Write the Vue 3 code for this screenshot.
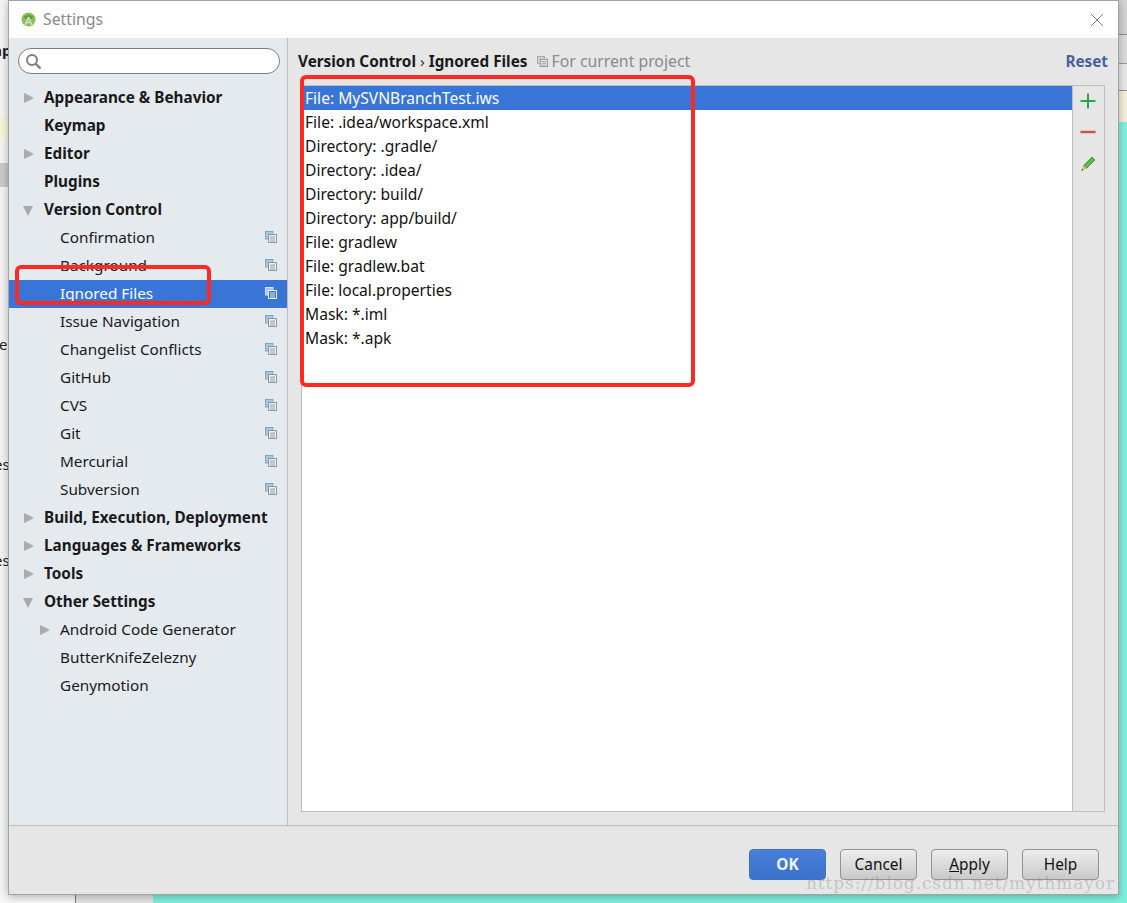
<script setup>
const tree = [
  { label: 'Appearance & Behavior', bold: true, arrow: 'right' },
  { label: 'Keymap', bold: true },
  { label: 'Editor', bold: true, arrow: 'right' },
  { label: 'Plugins', bold: true },
  { label: 'Version Control', bold: true, arrow: 'down' },
  { label: 'Confirmation', sub: true, copy: true },
  { label: 'Background', sub: true, copy: true },
  { label: 'Ignored Files', sub: true, copy: true, active: true },
  { label: 'Issue Navigation', sub: true, copy: true },
  { label: 'Changelist Conflicts', sub: true, copy: true },
  { label: 'GitHub', sub: true, copy: true },
  { label: 'CVS', sub: true, copy: true },
  { label: 'Git', sub: true, copy: true },
  { label: 'Mercurial', sub: true, copy: true },
  { label: 'Subversion', sub: true, copy: true },
  { label: 'Build, Execution, Deployment', bold: true, arrow: 'right' },
  { label: 'Languages & Frameworks', bold: true, arrow: 'right' },
  { label: 'Tools', bold: true, arrow: 'right' },
  { label: 'Other Settings', bold: true, arrow: 'down' },
  { label: 'Android Code Generator', sub: true, arrow: 'right' },
  { label: 'ButterKnifeZelezny', sub: true },
  { label: 'Genymotion', sub: true },
]
const files = [
  'File: MySVNBranchTest.iws',
  'File: .idea/workspace.xml',
  'Directory: .gradle/',
  'Directory: .idea/',
  'Directory: build/',
  'Directory: app/build/',
  'File: gradlew',
  'File: gradlew.bat',
  'File: local.properties',
  'Mask: *.iml',
  'Mask: *.apk',
]
</script>

<template>
  <div class="desk">
    <div class="bg-left">
      <span class="scrap s1">ap</span>
      <span class="scrap s2">e</span>
      <span class="scrap s3">es</span>
      <span class="scrap s4">es</span>
      <i class="yellow"></i>
      <i class="greyband"></i>
    </div>
    <div class="bg-bottom"><i class="b1"></i><i class="b2"></i><i class="b3"></i></div>
    <div class="bg-right"></div>

    <section class="dialog">
      <header class="title">
        <svg class="logo" width="15" height="15" viewBox="0 0 15 15">
          <circle cx="7.5" cy="7.5" r="7" fill="#8cc152" />
          <path d="M3 4.5 Q7.5 1 12 4.5 L11 7 H4 Z" fill="#5f9e3a" />
          <path d="M7.5 5 L4 13.5 M7.5 5 L11 13.5 M5 10.5 H10" stroke="#d8d8d8" stroke-width="1.5" fill="none" />
        </svg>
        <span class="title-text">Settings</span>
        <svg class="close" width="14" height="14" viewBox="0 0 14 14">
          <path d="M1 1 L13 13 M13 1 L1 13" stroke="#7d7d7d" stroke-width="1" fill="none" />
        </svg>
      </header>

      <div class="main">
        <aside class="side">
          <div class="search">
            <svg width="17" height="17" viewBox="0 0 17 17">
              <circle cx="7" cy="7" r="5" stroke="#7f7f7f" stroke-width="2" fill="none" />
              <path d="M10.8 10.8 L15.5 15.5" stroke="#7f7f7f" stroke-width="2.4" />
            </svg>
          </div>
          <ul class="tree">
            <li
              v-for="n in tree"
              :key="n.label"
              class="node"
              :class="{ bold: n.bold, sub: n.sub, active: n.active }"
            >
              <span v-if="n.arrow" class="arrow" :class="n.arrow"></span>
              <span class="label">{{ n.label }}</span>
              <svg v-if="n.copy" class="copy" width="12" height="12" viewBox="0 0 12 12">
                <rect x="0.5" y="0.5" width="7.5" height="7.5" :fill="n.active ? '#a9c3ea' : '#a9c6de'" :stroke="n.active ? '#d5e2f6' : '#7fa8c9'" />
                <rect x="3.5" y="3.5" width="8" height="8" :fill="n.active ? '#3875d7' : '#e6ebf0'" :stroke="n.active ? '#e8eef9' : '#8f9aa3'" />
                <path d="M5 6 H10 M5 8 H10 M5 10 H10" :stroke="n.active ? '#dbe6f7' : '#9aa4ad'" stroke-width="1" />
              </svg>
            </li>
          </ul>
        </aside>

        <div class="content">
          <div class="crumbs">
            <b>Version Control</b>
            <span class="sep">›</span>
            <b>Ignored Files</b>
            <svg class="crumb-copy" width="11" height="11" viewBox="0 0 12 12">
              <rect x="0.5" y="0.5" width="7.5" height="7.5" fill="#d5d5d5" stroke="#a5a5a5" />
              <rect x="3.5" y="3.5" width="8" height="8" fill="#e8e8e8" stroke="#8f8f8f" />
              <path d="M5 6 H10 M5 8 H10 M5 10 H10" stroke="#a0a0a0" />
            </svg>
            <span class="scope">For current project</span>
            <a class="reset">Reset</a>
          </div>
          <div class="panel">
            <ul class="files">
              <li v-for="(f, i) in files" :key="f" :class="{ sel: i === 0 }">{{ f }}</li>
            </ul>
            <div class="tools">
              <svg width="16" height="16" viewBox="0 0 16 16"><path d="M8 0.5 V15.5 M0.5 8 H15.5" stroke="#2aa34a" stroke-width="2" /></svg>
              <svg width="16" height="16" viewBox="0 0 16 16"><path d="M0.5 8 H15.5" stroke="#c75450" stroke-width="2.4" /></svg>
              <svg width="16" height="16" viewBox="0 0 16 16">
                <path d="M3.5 10.5 L12 2 L15 5 L6.5 13.5 Z" fill="#62b543" stroke="#3f8f36" stroke-width="0.8" />
                <path d="M3.5 10.5 L6.5 13.5 L1.5 15.5 Z" fill="#f2b56b" />
                <path d="M1 16 L2.5 13.5 L3.5 15 Z" fill="#444" />
              </svg>
            </div>
          </div>
        </div>
      </div>

      <footer class="foot">
        <button class="btn ok">OK</button>
        <button class="btn">Cancel</button>
        <button class="btn"><u>A</u>pply</button>
        <button class="btn">Help</button>
      </footer>
    </section>

    <i class="mark m1"></i>
    <i class="mark m2"></i>
    <span class="wm">https://blog.csdn.net/mythmayor</span>
  </div>
</template>

<style scoped>
.desk {
  position: relative;
  width: 1127px;
  height: 903px;
  overflow: hidden;
  background: #fff;
  font-family: "Noto Sans", "Open Sans", sans-serif;
  font-size: 15.3px;
  color: #1a1a1a;
}
.bg-left { position: absolute; left: 0; top: 0; width: 8px; height: 903px; background: #f4f4f4; }
.scrap { position: absolute; left: -6px; color: #222; font-size: 15px; line-height: 20px; }
.s1 { top: 40px; font-weight: 700; left: -7px; }
.s2 { top: 334px; left: -1px; }
.s3 { top: 454px; left: -6px; }
.s4 { top: 550px; left: -6px; }
.yellow { position: absolute; left: 0; top: 115px; width: 8px; height: 24px; background: #f6f5dc; }
.greyband { position: absolute; left: 0; top: 163px; width: 8px; height: 24px; background: #c9c9c9; }
.bg-bottom { position: absolute; left: 0; top: 894px; width: 1127px; height: 9px; display: flex; }
.bg-bottom i { display: block; height: 9px; }
.b1 { width: 75px; background: #f6f6f6; border-right: 1px solid #777; }
.b2 { width: 77px; background: #e4e4e4; }
.b3 { flex: 1; background: #7ff0de; }
.bg-right {
  position: absolute; left: 1119px; top: 0; width: 8px; height: 903px;
  background: linear-gradient(#d2d2d2 0 34px, #8d8d8d 34px 35px, #dcdcdc 35px 63px, #9a9a9a 63px 64px, #e8e8e8 64px 90px, #8f8f8f 90px 91px, #f3eedc 91px 122px, #7ff0de 122px);
}
.dialog {
  position: absolute;
  left: 8px; top: 0;
  width: 1111px; height: 895px;
  box-sizing: border-box;
  border: 1px solid #a3a3a3;
  background: #e6e6e6;
  display: flex;
  flex-direction: column;
  box-shadow: 0 2px 8px rgba(0, 0, 0, .28);
}
.title {
  height: 37px;
  flex: none;
  background: #fff;
  display: flex;
  align-items: center;
  padding-left: 12px;
  padding-right: 14px;
}
.logo { margin-right: 7px; }
.title-text { color: #8a8a8a; font-size: 15.8px; position: relative; top: -1px; }
.close { margin-left: auto; }
.main { flex: 1; display: flex; min-height: 0; border-bottom: 1px solid #bdbdbd; }
.side {
  width: 279px;
  box-sizing: border-box;
  flex: none;
  background: #e5eaef;
  border-right: 1px solid #bdbdbd;
  padding-top: 10px;
}
.search {
  margin-left: 9px;
  width: 262px;
  height: 26px;
  box-sizing: border-box;
  border: 1px solid #7d7d7d;
  border-radius: 13px;
  background: #fff;
  padding: 4px 0 0 6px;
}
.search svg { display: block; }
.tree { list-style: none; margin: 10px 0 0; padding: 0; }
.node {
  position: relative;
  height: 28px;
  line-height: 27px;
  padding-left: 35px;
  white-space: nowrap;
  color: #1a1a1a;
}
.node.bold { font-weight: 700; }
.node.sub { padding-left: 51px; }
.node.active { background: #3875d7; color: #fff; }
.arrow { position: absolute; top: 9px; left: 15px; width: 0; height: 0; border-style: solid; }
.sub .arrow { left: 31px; }
.arrow.right { border-width: 5.5px 0 5.5px 10px; border-color: transparent transparent transparent #ababab; }
.arrow.down { top: 10px; left: 14px; border-width: 10px 5.5px 0 5.5px; border-color: #ababab transparent transparent transparent; }
.copy { position: absolute; right: 10px; top: 7px; }
.content { flex: 1; display: flex; flex-direction: column; padding: 0 10px 0 10px; min-width: 0; }
.crumbs {
  height: 47px;
  flex: none;
  display: flex;
  align-items: center;
  white-space: nowrap;
  padding-bottom: 1px;
  box-sizing: border-box;
}
.crumbs b { font-weight: 700; color: #1a1a1a; }
.sep { margin: 0 4px; color: #333; }
.crumb-copy { margin: 0 4px 0 9px; }
.scope { color: #8a8a8a; font-size: 15.8px; }
.reset { margin-left: auto; color: #4b5f9e; font-weight: 700; }
.panel {
  height: 727px;
  flex: none;
  margin-left: 3px;
  margin-right: 3px;
  box-sizing: border-box;
  border: 1px solid #bdbdbd;
  display: flex;
}
.files { flex: 1; margin: 0; padding: 0; list-style: none; background: #fff; font-size: 15.6px; }
.files li { height: 24px; line-height: 24px; padding-left: 3px; color: #111; white-space: nowrap; }
.files li.sel { background: #3875d7; color: #fff; }
.tools {
  width: 32px;
  flex: none;
  box-sizing: border-box;
  border-left: 1px solid #bdbdbd;
  display: flex;
  flex-direction: column;
  align-items: center;
  padding-top: 7px;
  padding-right: 2px;
  gap: 15px;
}
.foot {
  height: 68px;
  flex: none;
  display: flex;
  justify-content: flex-end;
  gap: 14px;
  padding: 23px 19px 0 0;
  box-sizing: border-box;
}
.btn {
  width: 77px;
  height: 31px;
  box-sizing: border-box;
  border: 1px solid #929292;
  border-radius: 4px;
  background: linear-gradient(#ededed, #c9c9c9);
  font: 15.4px "Noto Sans", "Open Sans", sans-serif;
  color: #111;
  padding: 0;
}
.btn.ok { background: linear-gradient(#477fdb, #3b71ca); border-color: #3f72c4; color: #f2f2f2; font-weight: 700; }
.mark { position: absolute; box-sizing: border-box; border: 4px solid #fb2b22; }
.m1 { left: 15px; top: 265px; width: 196px; height: 40px; border-radius: 6px; }
.m2 { left: 300px; top: 75px; width: 395px; height: 312px; border-radius: 6px; }
.wm {
  position: absolute;
  left: 806px; top: 873px;
  font: 17px "DejaVu Serif", "Liberation Serif", serif;
  letter-spacing: .9px;
  color: rgba(120, 120, 120, .32);
  white-space: nowrap;
}
</style>
